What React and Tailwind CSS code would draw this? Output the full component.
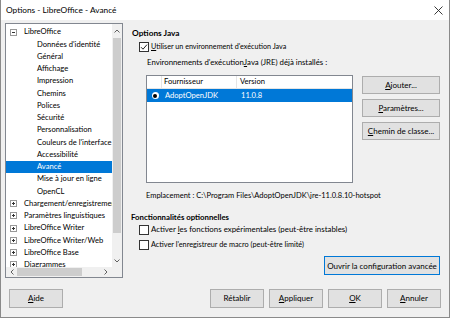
import React from "react";

const Expander = ({ open }) => (
  <svg width="7" height="7" viewBox="0 0 7 7" className="shrink-0">
    <rect x="0.5" y="0.5" width="6" height="6" fill="#fff" stroke="#999" />
    <line x1="2" y1="3.5" x2="5" y2="3.5" stroke="#333" />
    {!open && <line x1="3.5" y1="2" x2="3.5" y2="5" stroke="#333" />}
  </svg>
);

const Check = ({ checked }) => (
  <span className="w-[10px] h-[10px] border border-[#333] bg-white flex items-center justify-center shrink-0">
    {checked && (
      <svg width="8" height="8" viewBox="0 0 8 8">
        <path d="M1 4.2 L3 6.2 L7 1.6" stroke="#222" strokeWidth="1" fill="none" />
      </svg>
    )}
  </span>
);

const Btn = ({ children, className = "" }) => (
  <div className={"flex items-center justify-center bg-[#e1e1e1] border border-[#adadad] text-black text-[8px] whitespace-nowrap " + className}>
    {children}
  </div>
);

const tree = [
  { t: "LibreOffice", lvl: 0, open: true },
  { t: "Données d'identité", lvl: 1 },
  { t: "Général", lvl: 1 },
  { t: "Affichage", lvl: 1 },
  { t: "Impression", lvl: 1 },
  { t: "Chemins", lvl: 1 },
  { t: "Polices", lvl: 1 },
  { t: "Sécurité", lvl: 1 },
  { t: "Personnalisation", lvl: 1 },
  { t: "Couleurs de l'interface", lvl: 1 },
  { t: "Accessibilité", lvl: 1 },
  { t: "Avancé", lvl: 1, sel: true },
  { t: "Mise à jour en ligne", lvl: 1 },
  { t: "OpenCL", lvl: 1 },
  { t: "Chargement/enregistrement", lvl: 0 },
  { t: "Paramètres linguistiques", lvl: 0 },
  { t: "LibreOffice Writer", lvl: 0 },
  { t: "LibreOffice Writer/Web", lvl: 0 },
  { t: "LibreOffice Base", lvl: 0 },
  { t: "Diagrammes", lvl: 0 },
];

export default function App() {
  return (
    <div
      className="w-[450px] h-[318px] bg-[#f0f0f0] flex flex-col border-x border-b border-[#8a8a8a] text-[7.6px] text-black overflow-hidden"
      style={{ fontFamily: 'Lato, sans-serif' }}
    >
      {/* title bar */}
      <div className="h-[20px] bg-white flex items-center justify-between pl-[5px] pr-[6px] shrink-0">
        <span className="text-[8.3px]">Options - LibreOffice - Avancé</span>
        <svg width="9" height="9" viewBox="0 0 9 9">
          <path d="M0.5 0.5 L8.5 8.5 M8.5 0.5 L0.5 8.5" stroke="#222" strokeWidth="0.9" />
        </svg>
      </div>

      <div className="flex h-[268px] shrink-0">
        {/* tree */}
        <div className="ml-[4px] mt-[3px] w-[118px] h-[255px] border border-[#828790] bg-white flex flex-col">
          <div className="flex flex-1 min-h-0">
            <div className="flex-1 min-w-0 overflow-hidden pt-[2px]">
              {tree.map((r, i) => (
                <div
                  key={i}
                  className={
                    "h-[12.25px] flex items-center whitespace-nowrap " +
                    (r.sel ? "bg-[#0078d7] text-white" : "")
                  }
                >
                  {r.lvl === 0 ? (
                    <>
                      <span className="pl-[4px]" />
                      <Expander open={r.open} />
                      <span className="pl-[7px]">{r.t}</span>
                    </>
                  ) : (
                    <span className="pl-[31px]">{r.t}</span>
                  )}
                </div>
              ))}
            </div>
            <div className="w-[10px] bg-[#f0f0f0] flex flex-col items-center">
              <div className="h-[14px] flex items-center justify-center">
                <svg width="6" height="4" viewBox="0 0 6 4">
                  <path d="M0.5 3.5 L3 1 L5.5 3.5" stroke="#606060" fill="none" strokeWidth="1" />
                </svg>
              </div>
              <div className="w-[8px] h-[195px] bg-[#cdcdcd]" />
              <div className="flex-1" />
              <div className="h-[12px] flex items-center justify-center">
                <svg width="6" height="4" viewBox="0 0 6 4">
                  <path d="M0.5 0.5 L3 3 L5.5 0.5" stroke="#606060" fill="none" strokeWidth="1" />
                </svg>
              </div>
            </div>
          </div>
          <div className="h-[10px] flex bg-[#f0f0f0]">
            <div className="flex-1 flex items-center">
              <div className="w-[11px] flex items-center justify-center">
                <svg width="4" height="6" viewBox="0 0 4 6">
                  <path d="M3.5 0.5 L1 3 L3.5 5.5" stroke="#606060" fill="none" strokeWidth="1" />
                </svg>
              </div>
              <div className="w-[65px] h-[8px] bg-[#cdcdcd]" />
              <div className="flex-1" />
              <div className="w-[12px] flex items-center justify-center">
                <svg width="4" height="6" viewBox="0 0 4 6">
                  <path d="M0.5 0.5 L3 3 L0.5 5.5" stroke="#606060" fill="none" strokeWidth="1" />
                </svg>
              </div>
            </div>
            <div className="w-[10px]" />
          </div>
        </div>

        {/* right panel */}
        <div className="ml-[8px] flex-1 pr-[12px] flex flex-col whitespace-nowrap">
          <div className="mt-[7px] h-[12px] flex items-center font-bold text-[8.3px] pl-[1px]">Options Java</div>
          <div className="mt-[2px] h-[12px] flex items-center pl-[8px] gap-[1px]">
            <Check checked />
            <span className="pl-[1px] text-[7.2px]"><u>U</u>tiliser un environnement d'exécution Java</span>
          </div>
          <div className="mt-[4px] h-[12px] flex items-center pl-[16px] text-[7.8px]">
            Environnements d'exécution <u>J</u>ava (JRE) déjà installés :
          </div>
          <div className="mt-[6px] flex">
            <div className="ml-[15px] w-[207px] h-[108px] border border-[#828790] bg-white flex flex-col">
              <div className="h-[13px] flex border-b border-[#e5e5e5]">
                <div className="w-[15px] border-r border-[#e5e5e5]" />
                <div className="w-[75px] border-r border-[#e5e5e5] flex items-center pl-[2px]">Fournisseur</div>
                <div className="flex-1 flex items-center pl-[3px]">Version</div>
              </div>
              <div className="h-[13px] flex items-center bg-[#0078d7] text-white">
                <div className="w-[15px] flex items-center justify-center pl-[1px]">
                  <span className="w-[7px] h-[7px] rounded-full bg-white flex items-center justify-center">
                    <span className="w-[4px] h-[4px] rounded-full bg-black" />
                  </span>
                </div>
                <div className="w-[75px] pl-[3px]">AdoptOpenJDK</div>
                <div className="flex-1 pl-[4px]">11.0.8</div>
              </div>
            </div>
            <div className="ml-[9px] mt-[1px] flex flex-col gap-[5px]">
              <Btn className="w-[78px] h-[18px]"><span><u>A</u>jouter...</span></Btn>
              <Btn className="w-[78px] h-[18px]"><span><u>P</u>aramètres...</span></Btn>
              <Btn className="w-[78px] h-[18px]"><span><u>C</u>hemin de classe...</span></Btn>
            </div>
          </div>
          <div className="mt-[7px] h-[12px] flex items-center pl-[15px] text-[7.5px]">
            Emplacement : C:\Program Files\AdoptOpenJDK\jre-11.0.8.10-hotspot
          </div>
          <div className="mt-[10px] h-[12px] flex items-center font-bold text-[7.8px]">Fonctionnalités optionnelles</div>
          <div className="h-[12px] flex items-center pl-[8px] gap-[2px]">
            <Check />
            <span className="text-[7.9px]">Activer <u>l</u>es fonctions expérimentales (peut-être instables)</span>
          </div>
          <div className="mt-[3px] h-[12px] flex items-center pl-[8px] gap-[2px]">
            <Check />
            <span className="text-[7.3px]">Activer l'enregistreur de macro (peut-être limité)</span>
          </div>
          <div className="mt-[5px] flex justify-end">
            <Btn className="w-[116px] h-[19px] !border-[#0078d7]">
              <span>Ouvrir la confi<u>g</u>uration avancée</span>
            </Btn>
          </div>
        </div>
      </div>

      {/* bottom buttons */}
      <div className="mt-auto mb-[9px] h-[20px] flex items-center pl-[8px] pr-[8px] shrink-0">
        <Btn className="w-[54px] h-[19px]"><span><u>A</u>ide</span></Btn>
        <div className="flex-1" />
        <div className="flex gap-[5px]">
          <Btn className="w-[54px] h-[19px]"><span>Rétablir</span></Btn>
          <Btn className="w-[54px] h-[19px]"><span><u>A</u>ppliquer</span></Btn>
          <Btn className="w-[54px] h-[19px]"><span><u>O</u>K</span></Btn>
          <Btn className="w-[54px] h-[19px]"><span><u>A</u>nnuler</span></Btn>
        </div>
      </div>
    </div>
  );
}
